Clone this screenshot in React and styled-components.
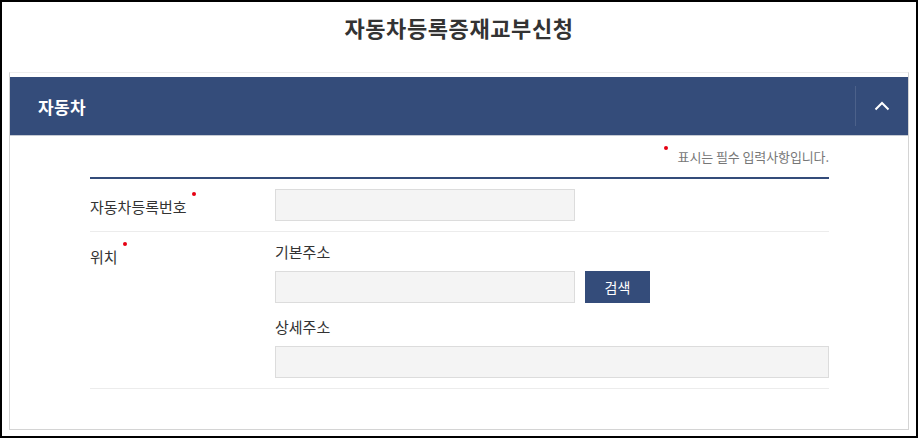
import React from 'react';
import styled, { createGlobalStyle } from 'styled-components';

const GlobalStyle = createGlobalStyle`
  * {
    box-sizing: border-box;
  }
  body {
    margin: 0;
    background: #fff;
    font-family: 'Noto Sans CJK KR', 'Noto Sans', sans-serif;
    color: #333;
  }
`;

const NAVY = '#344c7a';

function ChevronUp() {
  return (
    <svg width="16" height="10" viewBox="0 0 16 10" fill="none">
      <path d="M1.5 8.5 L8 2 L14.5 8.5" stroke="#fff" strokeWidth="2" />
    </svg>
  );
}

function App() {
  return (
    <Frame>
      <GlobalStyle />
      <Title>자동차등록증재교부신청</Title>
      <Panel>
        <PanelHeader>
          <h2>자동차</h2>
          <ToggleButton type="button" aria-label="접기">
            <ChevronUp />
          </ToggleButton>
        </PanelHeader>
        <PanelBody>
          <Note>
            <Required>표시는 필수 입력사항입니다.</Required>
          </Note>
          <Form>
            <Row $align="center">
              <Label>
                <Required $after>자동차등록번호</Required>
              </Label>
              <Fields>
                <Input $width="300px" />
              </Fields>
            </Row>
            <Row $align="start">
              <Label $top="15px">
                <Required $after>위치</Required>
              </Label>
              <Fields $top="10px">
                <SubLabel>기본주소</SubLabel>
                <InputLine>
                  <Input $width="300px" />
                  <SearchButton type="button">검색</SearchButton>
                </InputLine>
                <SubLabel $top="14px" $bottom="9px">
                  상세주소
                </SubLabel>
                <Input />
              </Fields>
            </Row>
          </Form>
        </PanelBody>
      </Panel>
    </Frame>
  );
}

const Frame = styled.div`
  width: 918px;
  height: 438px;
  border: 2px solid #000;
  padding: 0 7px;
  background: #fff;
`;

const Title = styled.h1`
  margin: 0;
  padding-top: 10px;
  height: 70px;
  font-size: 22px;
  line-height: 30px;
  font-weight: 700;
  letter-spacing: 0.6px;
  text-align: center;
  color: #333;
`;

const Panel = styled.section`
  width: 900px;
  border: 1px solid #d4d4d4;
  border-top-color: #eeeeee;
  padding-top: 4px;
`;

const PanelHeader = styled.div`
  display: flex;
  align-items: center;
  height: 59px;
  background: ${NAVY};
  border-bottom: 1px solid #c5cad3;
  padding-left: 28px;

  h2 {
    flex: 1;
    margin: 0;
    font-size: 17px;
    font-weight: 700;
    color: #fff;
    line-height: 1;
    letter-spacing: 0.3px;
  }
`;

const ToggleButton = styled.button`
  display: flex;
  align-items: center;
  justify-content: center;
  width: 53px;
  height: 40px;
  padding: 0 1px 0 0;
  background: transparent;
  border: 0;
  border-left: 1px solid rgba(255, 255, 255, 0.12);
  cursor: pointer;
`;

const PanelBody = styled.div`
  padding: 13px 79px 40px 80px;
`;

const Note = styled.p`
  margin: 0 0 12px;
  text-align: right;
  font-size: 13px;
  line-height: 16px;
  color: #777;
  letter-spacing: -0.1px;
`;

const Required = styled.span`
  position: relative;

  &::before,
  &::after {
    position: absolute;
    width: 4px;
    height: 4px;
    border-radius: 50%;
    background: #e60012;
  }

  &::before {
    content: ${(p) => (p.$after ? 'none' : "''")};
    left: -14px;
    top: -1px;
  }

  &::after {
    content: ${(p) => (p.$after ? "''" : 'none')};
    right: -9px;
    top: -4px;
  }
`;

const Form = styled.div`
  border-top: 2px solid ${NAVY};
`;

const Row = styled.div`
  display: grid;
  grid-template-columns: 185px 1fr;
  align-items: ${(p) => p.$align};
  padding: ${(p) => (p.$align === 'center' ? '10px 0' : '0 0 10px')};
  border-bottom: 1px solid #ececec;
`;

const Label = styled.div`
  padding-top: ${(p) => p.$top || '3px'};
  font-size: 15px;
  line-height: 20px;
  color: #333;
`;

const Fields = styled.div`
  display: flex;
  flex-direction: column;
  align-items: flex-start;
  padding-top: ${(p) => p.$top || '0'};
`;

const SubLabel = styled.div`
  margin: ${(p) => p.$top || '0'} 0 ${(p) => p.$bottom || '9px'};
  font-size: 15px;
  line-height: 20px;
  color: #333;
`;

const InputLine = styled.div`
  display: flex;
  gap: 10px;
`;

const Input = styled.input`
  width: ${(p) => p.$width || '100%'};
  height: 32px;
  margin: 0;
  padding: 0 10px;
  background: #f4f4f4;
  border: 1px solid #dcdcdc;
  font-family: inherit;
  font-size: 14px;
  outline: none;
`;

const SearchButton = styled.button`
  width: 65px;
  height: 32px;
  padding: 0;
  border: 0;
  background: ${NAVY};
  color: #fff;
  font-family: inherit;
  font-size: 14px;
  cursor: pointer;
`;

export default App;
